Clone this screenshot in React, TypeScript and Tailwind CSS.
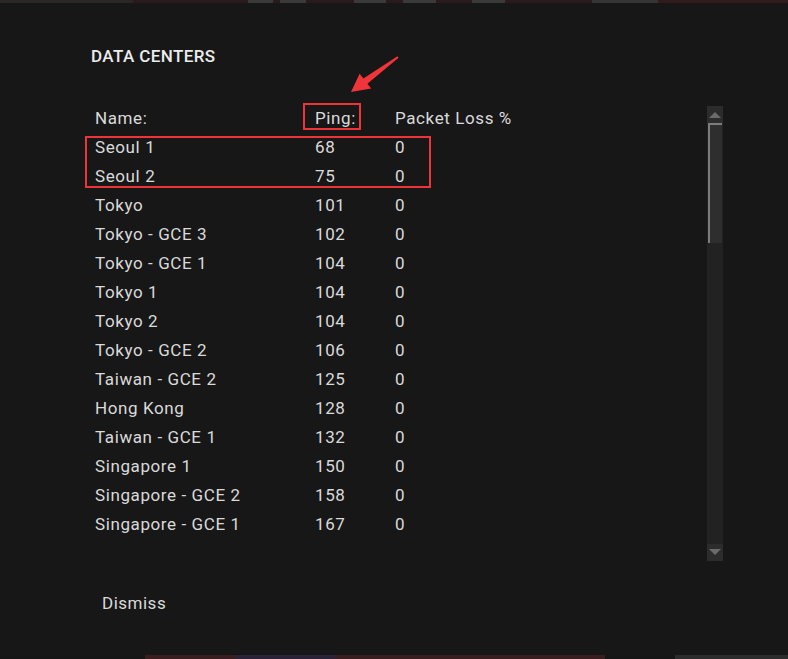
import React from "react";

const rows = [
  { name: "Seoul 1", ping: 68, loss: 0 },
  { name: "Seoul 2", ping: 75, loss: 0 },
  { name: "Tokyo", ping: 101, loss: 0 },
  { name: "Tokyo - GCE 3", ping: 102, loss: 0 },
  { name: "Tokyo - GCE 1", ping: 104, loss: 0 },
  { name: "Tokyo 1", ping: 104, loss: 0 },
  { name: "Tokyo 2", ping: 104, loss: 0 },
  { name: "Tokyo - GCE 2", ping: 106, loss: 0 },
  { name: "Taiwan - GCE 2", ping: 125, loss: 0 },
  { name: "Hong Kong", ping: 128, loss: 0 },
  { name: "Taiwan - GCE 1", ping: 132, loss: 0 },
  { name: "Singapore 1", ping: 150, loss: 0 },
  { name: "Singapore - GCE 2", ping: 158, loss: 0 },
  { name: "Singapore - GCE 1", ping: 167, loss: 0 },
];

function Scrollbar() {
  return (
    <div className="flex w-[16px] flex-col bg-[#222222]">
      <div className="flex h-[17px] items-center justify-center bg-[#2c2c2c]">
        <svg width="12" height="7" viewBox="0 0 12 7">
          <polygon points="0,7 6,1 12,7" fill="#6b6b6b" />
        </svg>
      </div>
      <div className="mx-[1px] h-[120px] border-l-2 border-t-2 border-[#7c7c7c] bg-[#2e2e2e]" />
      <div className="flex-1" />
      <div className="flex h-[17px] items-center justify-center bg-[#2c2c2c]">
        <svg width="12" height="7" viewBox="0 0 12 7">
          <polygon points="0,0 6,6 12,0" fill="#6b6b6b" />
        </svg>
      </div>
    </div>
  );
}

export default function App() {
  return (
    <div
      className="flex h-[659px] w-full flex-col overflow-hidden bg-[#171717] text-[#dadada]"
      style={{ fontFamily: "Roboto, 'Liberation Sans', sans-serif" }}
    >
      {/* game ui peeking above */}
      <div className="flex h-[3px] shrink-0 bg-[#2a1a1b]">
        <div className="w-[133px] bg-[#2a2827]" />
        <div className="w-[115px]" />
        <div className="w-[25px] bg-[#3a3a3a]" />
        <div className="w-[7px]" />
        <div className="w-[26px] bg-[#3a3a3a]" />
        <div className="w-[48px]" />
        <div className="w-[32px] bg-[#3a3a3a]" />
        <div className="w-[17px]" />
        <div className="w-[33px] bg-[#3a3a3a]" />
        <div className="w-[36px]" />
        <div className="w-[33px] bg-[#3a3a3a]" />
        <div className="w-[87px]" />
        <div className="w-[66px] bg-[#353535]" />
        <div className="flex-1 bg-[#321b1c]" />
      </div>

      <div className="relative flex-1 pl-[91px] pt-[41px]">
        <h1 className="text-[17px] font-medium leading-[24px] tracking-[0.4px] text-[#ececec]">
          DATA CENTERS
        </h1>

        <div className="mt-[36px] flex">
          <div className="w-[616px] pl-[4px] text-[17px] tracking-[0.6px]">
            <div className="flex h-[29px] items-center">
              <span className="w-[220px]">Name:</span>
              <span className="w-[80px]">Ping:</span>
              <span>Packet Loss %</span>
            </div>
            {rows.map((r) => (
              <div key={r.name} className="flex h-[29px] items-center">
                <span className="w-[220px]">{r.name}</span>
                <span className="w-[80px]">{r.ping}</span>
                <span>{r.loss}</span>
              </div>
            ))}
          </div>
          <div className="mt-[2px] flex h-[455px]">
            <Scrollbar />
          </div>
        </div>

        <div className="mt-[30px] pl-[11px] text-[17px] leading-[24px] tracking-[0.5px]">Dismiss</div>

        {/* annotations */}
        <div className="absolute left-[303px] top-[100px] h-[27px] w-[58px] border-2 border-[#ee3438]" />
        <div className="absolute left-[85px] top-[133px] h-[52px] w-[346px] border-2 border-[#ee3438]" />
        <svg className="absolute left-[340px] top-[47px]" width="70" height="55" viewBox="0 0 70 55">
          <polygon
            points="11,42 19.6,23.8 23.4,28.6 57.4,6.2 58.6,7.8 27.4,33.8 31.2,38.6"
            fill="#ef3539"
          />
        </svg>
      </div>

      <div className="flex h-[4px] shrink-0 bg-[#161616]">
        <div className="w-[145px]" />
        <div className="w-[90px] bg-[#3a1d1f]" />
        <div className="w-[100px] bg-[#2a2236]" />
        <div className="w-[270px] bg-[#3a1d1f]" />
        <div className="w-[70px]" />
        <div className="flex-1 bg-[#2c2c2c]" />
      </div>
    </div>
  );
}
